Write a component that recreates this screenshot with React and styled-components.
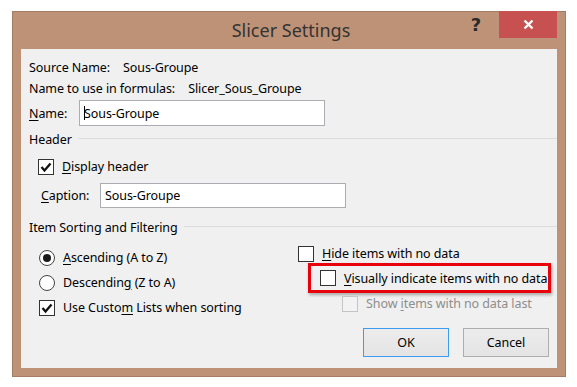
import React from 'react'
import styled, { createGlobalStyle } from 'styled-components'

const GlobalStyle = createGlobalStyle`
  html, body {
    margin: 0;
    background: #ffffff;
  }
  body {
    font-family: "Noto Sans", "Open Sans", sans-serif;
    font-size: 12.5px;
    color: #000;
  }
`

const Window = styled.div`
  margin: 11px 0 0 12px;
  width: 554px;
  height: 366px;
  box-sizing: border-box;
  background: #be9276;
  border: 1px solid #a47d64;
  padding: 0 8px 8px 8px;
  display: flex;
  flex-direction: column;
`

const TitleBar = styled.div`
  height: 37px;
  display: grid;
  grid-template-columns: 1fr auto 1fr;
  align-items: start;
`

const Title = styled.div`
  grid-column: 2;
  font-size: 18px;
  color: #333;
  line-height: 37px;
  padding-left: 4px;
`

const Controls = styled.div`
  grid-column: 3;
  justify-self: end;
  display: flex;
  align-items: flex-start;
  margin-top: -1px;
`

const HelpButton = styled.div`
  width: 22px;
  text-align: center;
  font-family: "DejaVu Sans", sans-serif;
  font-weight: bold;
  font-size: 18px;
  line-height: 28px;
  color: #2a2a2a;
  margin-right: 12px;
`

const CloseButton = styled.div`
  width: 58px;
  height: 27px;
  background: #c75050;
  display: flex;
  align-items: center;
  justify-content: center;
`

const Content = styled.div`
  flex: 1;
  background: #f0f0f0;
  padding: 8px 0 0 8px;
  display: flex;
  flex-direction: column;
  white-space: nowrap;
  letter-spacing: -0.08px;
`

const InfoRow = styled.div`
  height: 21px;
  display: flex;
  align-items: center;
  gap: 13px;
`

const FieldRow = styled.div`
  display: flex;
  align-items: center;
  margin-top: ${p => p.$top}px;
  padding-left: ${p => p.$indent || 0}px;
`

const FieldLabel = styled.div`
  width: ${p => p.$w}px;
`

const TextInput = styled.div`
  width: ${p => p.$w}px;
  height: ${p => p.$h}px;
  box-sizing: border-box;
  background: #fff;
  border: 1px solid #abadb3;
  padding-left: 4px;
  display: flex;
  align-items: center;
`

const Caret = styled.span`
  display: inline-block;
  width: 1px;
  height: 14px;
  background: #000;
  margin-right: -1px;
`

const Legend = styled.div`
  height: 22px;
  margin-top: ${p => p.$top}px;
  display: flex;
  align-items: center;
  gap: 6px;
  &::after {
    content: "";
    flex: 1;
    height: 1px;
    background: #dcdcdc;
    margin-top: -1px;
  }
`

const Columns = styled.div`
  display: flex;
`

const LeftCol = styled.div`
  width: 259px;
  padding: 7px 0 0 10px;
  display: flex;
  flex-direction: column;
`

const RightCol = styled.div`
  flex: 1;
  padding-top: 3px;
  display: flex;
  flex-direction: column;
`

const Option = styled.div`
  height: 25px;
  display: flex;
  align-items: center;
  gap: 8px;
  margin-left: ${p => p.$indent || 0}px;
  color: ${p => (p.$disabled ? '#8d8d8d' : '#000')};
`

const Box = styled.span`
  width: 16px;
  height: 16px;
  box-sizing: border-box;
  border: 1px solid ${p => (p.$disabled ? '#c4c4c4' : '#333')};
  background: ${p => (p.$disabled ? '#f2f2f2' : '#fff')};
  display: flex;
  align-items: center;
  justify-content: center;
  flex: none;
`

const Radio = styled.span`
  width: 16px;
  height: 16px;
  box-sizing: border-box;
  border: 1px solid #444;
  border-radius: 50%;
  background: #fff;
  display: flex;
  align-items: center;
  justify-content: center;
  flex: none;
  &::after {
    content: "";
    width: 8px;
    height: 8px;
    border-radius: 50%;
    background: ${p => (p.$checked ? '#1a1a1a' : 'transparent')};
  }
`

const Highlight = styled.div`
  width: 243px;
  height: 30px;
  box-sizing: border-box;
  margin: -3px 0 -2px 10px;
  padding-left: 9px;
  border: 3px solid #e8000b;
  box-shadow: 1px 2px 3px rgba(0, 0, 0, 0.3);
  display: flex;
  align-items: center;
  & > ${Option} {
    margin-left: 0;
  }
`

const ButtonRow = styled.div`
  display: flex;
  justify-content: flex-end;
  gap: 14px;
  margin-top: 12px;
  padding-right: 8px;
`

const Button = styled.div`
  width: 86px;
  height: 29px;
  box-sizing: border-box;
  border: 1px solid ${p => (p.$default ? '#3c9cf5' : '#adadad')};
  background: linear-gradient(#ececec, #e4e4e4);
  display: flex;
  align-items: center;
  justify-content: center;
`

const Check = () => (
  <svg width="12" height="12" viewBox="0 0 12 12">
    <polyline points="1.5,6 4.5,9.5 10.5,2.5" fill="none" stroke="#111" strokeWidth="2.3" />
  </svg>
)

const Key = styled.u`
  text-underline-offset: 2px;
`

const Checkbox = ({ checked, disabled, indent, children }) => (
  <Option $indent={indent} $disabled={disabled}>
    <Box $disabled={disabled}>{checked && <Check />}</Box>
    <span>{children}</span>
  </Option>
)

const RadioOption = ({ checked, children }) => (
  <Option>
    <Radio $checked={checked} />
    <span>{children}</span>
  </Option>
)

export default function App() {
  return (
    <>
      <GlobalStyle />
      <Window>
        <TitleBar>
          <Title>Slicer Settings</Title>
          <Controls>
            <HelpButton>?</HelpButton>
            <CloseButton>
              <svg width="11" height="11" viewBox="0 0 11 11">
                <path d="M1.5 1.5 L9.5 9.5 M9.5 1.5 L1.5 9.5" stroke="#fff" strokeWidth="2.4" />
              </svg>
            </CloseButton>
          </Controls>
        </TitleBar>
        <Content>
          <InfoRow>
            <span>Source Name:</span>
            <span>Sous-Groupe</span>
          </InfoRow>
          <InfoRow>
            <span>Name to use in formulas:</span>
            <span>Slicer_Sous_Groupe</span>
          </InfoRow>
          <FieldRow $top={1}>
            <FieldLabel $w={50}><Key>N</Key>ame:</FieldLabel>
            <TextInput $w={246} $h={26}>
              <Caret />Sous-Groupe
            </TextInput>
          </FieldRow>
          <Legend $top={2}>Header</Legend>
          <FieldRow $top={4} $indent={9}>
            <Checkbox checked>
              <Key>D</Key>isplay header
            </Checkbox>
          </FieldRow>
          <FieldRow $top={4} $indent={12}>
            <FieldLabel $w={59}><Key>C</Key>aption:</FieldLabel>
            <TextInput $w={246} $h={25}>Sous-Groupe</TextInput>
          </FieldRow>
          <Legend $top={8}>Item Sorting and Filtering</Legend>
          <Columns>
            <LeftCol>
              <RadioOption checked>
                <Key>A</Key>scending (A to Z)
              </RadioOption>
              <RadioOption>
                Descendin<Key>g</Key> (Z to A)
              </RadioOption>
              <Checkbox checked>
                Use Custo<Key>m</Key> Lists when sorting
              </Checkbox>
            </LeftCol>
            <RightCol>
              <Checkbox>
                <Key>H</Key>ide items with no data
              </Checkbox>
              <Highlight>
                <Checkbox>
                  <Key>V</Key>isually indicate items with no data
                </Checkbox>
              </Highlight>
              <Checkbox disabled indent={44}>
                Show <Key>i</Key>tems with no data last
              </Checkbox>
              <ButtonRow>
                <Button $default>OK</Button>
                <Button>Cancel</Button>
              </ButtonRow>
            </RightCol>
          </Columns>
        </Content>
      </Window>
    </>
  )
}
